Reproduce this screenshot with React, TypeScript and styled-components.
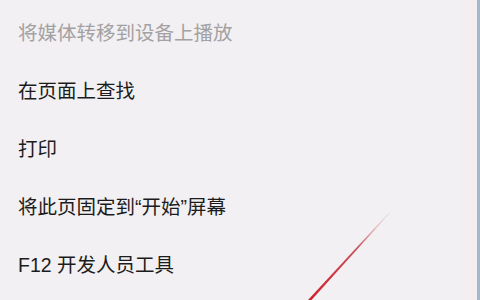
import styled, { createGlobalStyle } from "styled-components";

const GlobalStyle = createGlobalStyle`
  html, body {
    margin: 0;
    padding: 0;
    background: #f2f0f2;
  }
  body {
    font-family: "Liberation Sans", "Noto Sans CJK SC", sans-serif;
  }
`;

const Panel = styled.div`
  position: relative;
  width: 480px;
  height: 300px;
  display: flex;
  overflow: hidden;
  background: #f2f0f2;
`;

const Menu = styled.ul`
  flex: 1;
  list-style: none;
  margin: 0;
  padding: 4px 0 0 18px;
`;

const Item = styled.li<{ disabled?: boolean }>`
  height: 58px;
  line-height: 58px;
  font-size: 19.5px;
  white-space: nowrap;
  color: ${(p) => (p.disabled ? "#a3a1a3" : "#1c1c1c")};
`;

const Edge = styled.div`
  width: 14px;
  background: #f4eef1;
  border-right: 2px solid #eef0f4;
`;

const Scroll = styled.div`
  width: 3px;
  background: #a9b5cb;
`;

const Stroke = styled.svg`
  position: absolute;
  left: 300px;
  top: 205px;
`;

const items = [
  { label: "将媒体转移到设备上播放", disabled: true },
  { label: "在页面上查找" },
  { label: "打印" },
  { label: "将此页固定到“开始”屏幕" },
  { label: "F12 开发人员工具" },
];

export default function App() {
  return (
    <>
      <GlobalStyle />
      <Panel>
        <Menu>
          {items.map((it) => (
            <Item key={it.label} disabled={it.disabled}>
              {it.label}
            </Item>
          ))}
        </Menu>
        <Edge />
        <Scroll />
        <Stroke width="100" height="95" viewBox="0 0 100 95">
          <defs>
            <linearGradient id="red" x1="0" y1="1" x2="1" y2="0">
              <stop offset="0" stopColor="#d21f2b" />
              <stop offset="0.6" stopColor="#c8505a" />
              <stop offset="1" stopColor="#e0c8cc" stopOpacity="0.3" />
            </linearGradient>
          </defs>
          <polygon points="8,95 11.5,95 90,8 88.5,8" fill="url(#red)" />
        </Stroke>
      </Panel>
    </>
  );
}
